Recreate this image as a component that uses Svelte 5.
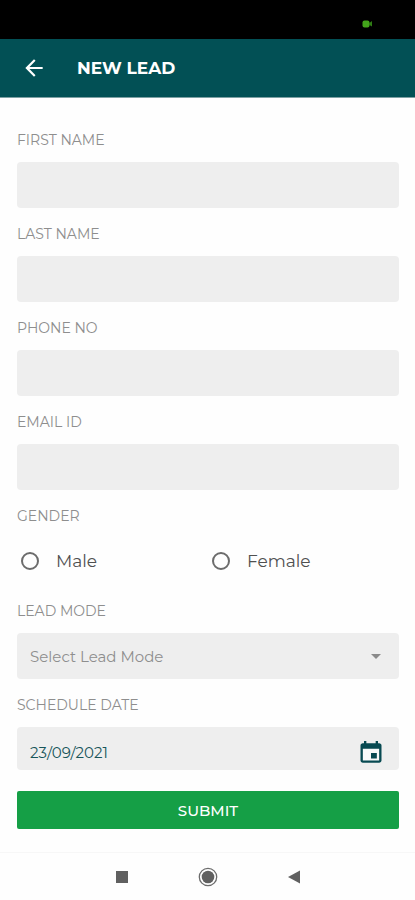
<script lang="ts">
  const textFields = [
    { id: 'first-name', label: 'FIRST NAME', type: 'text' },
    { id: 'last-name', label: 'LAST NAME', type: 'text' },
    { id: 'phone', label: 'PHONE NO', type: 'tel' },
    { id: 'email', label: 'EMAIL ID', type: 'email' }
  ];

  const genders = ['Male', 'Female'];

  let values: Record<string, string> = $state({});
  let gender = $state('');
</script>

<div class="screen">
  <div class="status-bar">
    <svg class="camera" viewBox="0 0 11 8" aria-hidden="true">
      <rect x="0.5" y="0.5" width="7" height="7" rx="2" fill="#43a51b" />
      <path d="M7 3.2 10 1v5.5L7 4.8z" fill="#2f7d14" />
    </svg>
  </div>

  <header class="app-bar">
    <button class="back" aria-label="Back">
      <svg viewBox="0 0 24 24" width="26" height="26">
        <path d="M20 11H7.83l5.59-5.59L12 4l-8 8 8 8 1.41-1.41L7.83 13H20v-2z" fill="#fff" />
      </svg>
    </button>
    <h1>NEW LEAD</h1>
  </header>

  <form class="form">
    {#each textFields as field (field.id)}
      <div class="group">
        <label class={['label', field.id]} for={field.id}><span>{field.label}</span></label>
        <input class="box" id={field.id} type={field.type} bind:value={values[field.id]} />
      </div>
    {/each}

    <div class="group gender">
      <span class="label"><span>GENDER</span></span>
      <div class="options">
        {#each genders as option (option)}
          <label class="option">
            <input type="radio" name="gender" value={option} bind:group={gender} />
            <span class={option.toLowerCase()}>{option}</span>
          </label>
        {/each}
      </div>
    </div>

    <div class="group">
      <span class="label lead-mode"><span>LEAD MODE</span></span>
      <button type="button" class="box select">
        <span>Select Lead Mode</span>
        <svg viewBox="0 0 10 5" width="10" height="5" aria-hidden="true">
          <path d="M0 0h10L5 5z" fill="#8a8a8a" />
        </svg>
      </button>
    </div>

    <div class="group">
      <span class="label schedule"><span>SCHEDULE DATE</span></span>
      <button type="button" class="box date">
        <span>23/09/2021</span>
        <svg viewBox="0 0 24 24" width="28" height="26" preserveAspectRatio="none" aria-hidden="true">
          <path d="M4 8h16v13H4z" fill="#f8fafa" />
          <path
            d="M17 12h-5v5h5v-5zM16 1v2H8V1H6v2H5c-1.11 0-1.99.9-1.99 2L3 19c0 1.1.89 2 2 2h14c1.1 0 2-.9 2-2V5c0-1.100-.9-2-2-2h-1V1h-2zm3 18H5V8h14v11z"
            fill="#084a52"
          />
        </svg>
      </button>
    </div>

    <button type="button" class="submit"><span>SUBMIT</span></button>
  </form>

  <nav class="nav-bar">
    <svg viewBox="0 0 22 22" width="22" height="22">
      <rect x="5" y="5" width="12" height="12" fill="#606060" />
    </svg>
    <svg viewBox="0 0 22 22" width="22" height="22">
      <circle cx="11" cy="11" r="8.700" fill="none" stroke="#6c6c6c" stroke-width="1.300" />
      <circle cx="11" cy="11" r="6.300" fill="#606060" />
    </svg>
    <svg viewBox="0 0 22 22" width="22" height="22">
      <path d="M17 4.500v13L5 11z" fill="#606060" />
    </svg>
  </nav>
</div>

<style>
  :global(body) {
    margin: 0;
    background: #fefefe;
  }

  .screen {
    display: flex;
    flex-direction: column;
    width: 100%;
    height: 900px;
    overflow: hidden;
    background: #fefefe;
    font-family: Montserrat, Inter, sans-serif;
  }

  button {
    padding: 0;
    border: 0;
    background: none;
    font: inherit;
    cursor: pointer;
  }

  svg {
    display: block;
  }

  .status-bar {
    display: flex;
    flex: none;
    justify-content: flex-end;
    box-sizing: border-box;
    height: 39px;
    padding: 20px 42px 0 0;
    background: #000;
  }

  .camera {
    width: 11px;
    height: 8px;
  }

  .app-bar {
    display: flex;
    flex: none;
    align-items: center;
    gap: 30px;
    box-sizing: border-box;
    height: 59px;
    padding-left: 21px;
    border-bottom: 1px solid #7da0a3;
    background: #025055;
  }

  h1 {
    margin: 0;
    color: #fff;
    font-size: 17px;
    font-weight: 700;
    line-height: 24px;
  }

  .form {
    display: flex;
    flex-direction: column;
    gap: 17px;
    height: 754px;
    box-sizing: border-box;
    padding: 33px 16px 0 17px;
  }

  .group {
    display: flex;
    flex-direction: column;
    gap: 13px;
  }

  .label {
    color: #8e8e8e;
    font-size: 14px;
    line-height: 18px;
  }

  .box {
    box-sizing: border-box;
    width: 100%;
    height: 46px;
    padding: 0 13px;
    border: 0;
    border-radius: 4px;
    outline: 0;
    background: #eee;
    font: inherit;
  }

  .gender {
    height: 78px;
  }

  .options {
    display: grid;
    grid-template-columns: 1fr 1fr;
    padding-top: 11px;
  }

  .option {
    display: flex;
    align-items: center;
    gap: 17px;
    padding-left: 4px;
    color: #505050;
    font-size: 17px;
    line-height: 24px;
  }

  .option input {
    appearance: none;
    box-sizing: border-box;
    width: 18px;
    height: 18px;
    margin: 0;
    border: 2px solid #6c6c6c;
    border-radius: 50%;
  }

  .select,
  .date {
    display: flex;
    align-items: center;
    justify-content: space-between;
  }

  .select {
    padding-right: 18px;
    color: #8e8e8e;
    font-size: 15px;
  }

  .date {
    height: 43px;
    padding: 8px 14px 0 13px;
    color: #17555a;
    font-size: 15px;
  }

  .submit {
    height: 38px;
    margin-top: 4px;
    border-radius: 2px;
    background: #159f46;
    color: #fff;
    font-size: 15px;
    font-weight: 500;
  }

  .nav-bar {
    display: flex;
    flex: 1;
    align-items: center;
    justify-content: center;
    gap: 64px;
    border-top: 1px solid #f7f7f7;
  }
</style>
